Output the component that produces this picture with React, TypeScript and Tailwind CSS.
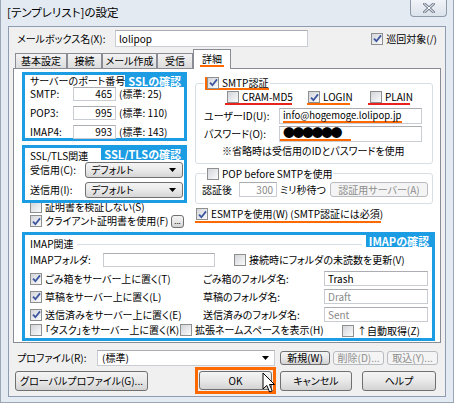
import React from "react"

const BLUE = "border-[#1c9de3]"

function Cb({ on = false }: { on?: boolean }) {
  return (
    <span className="inline-flex shrink-0 w-[12px] h-[12px] items-center justify-center border border-[#8e8f8f] bg-gradient-to-br from-[#d2d5da] to-[#fbfbfb]">
      {on && (
        <svg width="9" height="9" viewBox="0 0 9 9">
          <path d="M1 4.6 L3.4 7.2 L8 1.4" fill="none" stroke="#3d56a0" strokeWidth="1.8" />
        </svg>
      )}
    </span>
  )
}

function Check({ on = false, label, dim = false }: { on?: boolean; label: string; dim?: boolean }) {
  return (
    <span className="inline-flex items-center gap-[3px] whitespace-nowrap">
      <Cb on={on} />
      <span className={dim ? "text-[#8a8a8a]" : ""}>{label}</span>
    </span>
  )
}

function Field({ children, cls = "", right = false, grey = false }: { children?: React.ReactNode; cls?: string; right?: boolean; grey?: boolean }) {
  return (
    <div
      className={`flex items-center bg-white border border-[#c9ccd2] border-t-[#abadb3] px-[3px] whitespace-nowrap ${right ? "justify-end" : ""} ${grey ? "text-[#8a8a8a]" : ""} ${cls}`}
    >
      {children}
    </div>
  )
}

function Btn({ children, cls = "", dis = false }: { children: React.ReactNode; cls?: string; dis?: boolean }) {
  return (
    <div
      className={`flex items-center justify-center rounded-[3px] border whitespace-nowrap ${
        dis
          ? "border-[#b8bcc0] bg-[#f4f4f4] text-[#8d8d8d]"
          : "border-[#707070] bg-gradient-to-b from-[#f4f4f4] via-[#e8e8e8] to-[#d3d3d3]"
      } ${cls}`}
    >
      {children}
    </div>
  )
}

function Combo({ text, cls = "" }: { text: string; cls?: string }) {
  return (
    <div className={`flex items-center justify-between rounded-[3px] border border-[#707070] bg-gradient-to-b from-[#f4f4f4] via-[#e9e9e9] to-[#d6d6d6] pl-[5px] pr-[6px] ${cls}`}>
      <span>{text}</span>
      <svg width="7" height="4" viewBox="0 0 7 4">
        <path d="M0 0 H7 L3.5 4 Z" fill="#000" />
      </svg>
    </div>
  )
}

function Tag({ children }: { children: React.ReactNode }) {
  return (
    <span className="h-[12px] bg-[#1c9de3] text-white font-bold text-[11px] leading-[12px] px-[3px] whitespace-nowrap">
      {children}
    </span>
  )
}

function Tab({ label, sel = false, cls = "" }: { label: string; sel?: boolean; cls?: string }) {
  return sel ? (
    <div className={`relative z-10 h-[20px] mb-[-1px] bg-white border border-b-0 border-[#898c95] flex justify-center pt-[4px] ${cls}`}>
      <span className="border-b-[2px] border-[#ff6a00] h-[13px] px-[2px]">{label}</span>
    </div>
  ) : (
    <div className={`h-[15px] border border-b-0 border-[#898c95] bg-gradient-to-b from-[#f3f3f3] to-[#dcdcdc] flex items-center justify-center ${cls}`}>
      {label}
    </div>
  )
}

export default function App() {
  return (
    <div className="relative w-[454px] h-[403px] bg-[#e4eaf2] border-x border-b border-[#9aa6b5] flex flex-col text-[10px] leading-none text-black whitespace-nowrap font-['Noto_Sans_CJK_JP','Noto_Sans',sans-serif] [font-feature-settings:'palt']">
      {/* title bar */}
      <div className="h-[26px] flex items-start justify-between">
        <span className="ml-[6px] mt-[7px] text-[11.5px]">[テンプレリスト]の設定</span>
        <div className="mr-[6px] w-[37px] h-[17px] rounded-b-[4px] border border-t-0 border-[#8d99a9] bg-gradient-to-b from-[#f1f4f8] to-[#dbe2ea] flex items-center justify-center">
          <svg width="12" height="10" viewBox="0 0 12 10">
            <path d="M1.5 1 L10.5 9 M10.5 1 L1.5 9" stroke="#7b8595" strokeWidth="3" strokeLinecap="round" />
            <path d="M1.5 1 L10.5 9 M10.5 1 L1.5 9" stroke="#fff" strokeWidth="1" strokeLinecap="round" />
          </svg>
        </div>
      </div>

      {/* client area */}
      <div className="mx-[7px] h-[371px] bg-[#f0f0f0] border border-[#8e9bb0] flex flex-col px-[4px]">
        <div className="mt-[3px] h-[17px] flex items-center pl-[4px]">
          <span className="w-[98px]">メールボックス名(X):</span>
          <Field cls="w-[193px] h-[17px]">lolipop</Field>
          <span className="ml-auto mr-[4px]">
            <Check on label="巡回対象(/)" />
          </span>
        </div>

        {/* tabs */}
        <div className="mt-[2px] h-[19px] flex items-end pl-[2px]">
          <Tab label="基本設定" cls="w-[52px]" />
          <Tab label="接続" cls="w-[35px]" />
          <Tab label="メール作成" cls="w-[55px]" />
          <Tab label="受信" cls="w-[36px]" />
          <Tab label="詳細" sel cls="w-[38px]" />
        </div>

        {/* tab panel */}
        <div className="h-[275px] border border-[#898c95] bg-white pt-[3px] pl-[8px] flex flex-col">
          <div className="flex">
            {/* left column */}
            <div className="w-[165px] flex flex-col">
              <div className={`h-[69px] border-[3px] ${BLUE} flex flex-col`}>
                <div className="h-[12px] flex items-start justify-between">
                  <span className="pl-[5px] pt-[1px]">サーバーのポート番号</span>
                  <Tag>SSLの確認</Tag>
                </div>
                <div className="flex flex-col gap-[5px]">
                  {[
                    ["SMTP:", "465", "(標準: 25)"],
                    ["POP3:", "995", "(標準: 110)"],
                    ["IMAP4:", "993", "(標準: 143)"],
                  ].map(([l, v, s]) => (
                    <div key={l} className="h-[14px] flex items-center pl-[5px]">
                      <span className="w-[43px]">{l}</span>
                      <Field right cls="w-[43px] h-[14px]">{v}</Field>
                      <span className="ml-[3px]">{s}</span>
                    </div>
                  ))}
                </div>
              </div>

              <div className={`mt-[4px] h-[58px] border-[3px] ${BLUE} flex flex-col`}>
                <div className="h-[12px] flex items-start justify-between">
                  <span className="pl-[5px] pt-[3px]">SSL/TLS関連</span>
                  <Tag>SSL/TLSの確認</Tag>
                </div>
                <div className="mt-[2px] flex flex-col gap-[4px]">
                  <div className="h-[16px] flex items-center pl-[5px]">
                    <span className="w-[55px]">受信用(C):</span>
                    <Combo text="デフォルト" cls="w-[98px] h-[16px]" />
                  </div>
                  <div className="h-[16px] flex items-center pl-[5px]">
                    <span className="w-[55px]">送信用(I):</span>
                    <Combo text="デフォルト" cls="w-[98px] h-[16px]" />
                  </div>
                </div>
              </div>

              <div className="h-[10px] overflow-hidden flex items-end pl-[8px]">
                <div className="h-[13px] flex items-center">
                  <Check label="証明書を検証しない(S)" />
                </div>
              </div>
              <div className="mt-[1px] h-[14px] flex items-center pl-[8px]">
                <Check on label="クライアント証明書を使用(F)" />
                <Btn cls="ml-auto mr-[3px] w-[13px] h-[13px] text-[8px]">...</Btn>
              </div>
            </div>

            {/* right column */}
            <div className="ml-[8px] w-[238px] flex flex-col">
              <fieldset className="mt-[5px] border border-[#d5dfe5] rounded-[3px] pb-[6px]">
                <legend className="ml-[8px] px-[1px]">
                  <span className="flex items-center gap-[3px] h-[13px] border-l-[2px] border-b-[2px] border-[#ff6a00] pr-[1px]">
                    <Cb on />
                    <span>SMTP認証</span>
                  </span>
                </legend>
                <div className="mt-[1px] h-[14px] flex items-center pl-[29px]">
                  <span className="w-[67px] h-[14px] flex items-center pl-[2px] border-b-[2px] border-[#e8231c]">
                    <Check label="CRAM-MD5" />
                  </span>
                  <span className="ml-[15px] w-[43px] h-[14px] flex items-center pl-[1px] border-b-[2px] border-[#ff6a00]">
                    <Check on label="LOGIN" />
                  </span>
                  <span className="ml-[18px] w-[42px] h-[14px] flex items-center pl-[2px] border-b-[2px] border-[#e8231c]">
                    <Check label="PLAIN" />
                  </span>
                </div>
                <div className="mt-[3px] h-[16px] flex items-center pl-[8px]">
                  <span className="w-[75px]">ユーザーID(U):</span>
                  <Field cls="w-[143px] h-[16px] items-end">
                    <span className="h-[13px] border-b-[2px] border-[#ff6a00] pr-[1px] text-[9.5px] leading-[11px]">info@hogemoge.lolipop.jp</span>
                  </Field>
                </div>
                <div className="mt-[2px] h-[16px] flex items-center pl-[8px]">
                  <span className="w-[75px]">パスワード(O):</span>
                  <Field cls="w-[143px] h-[16px] items-end !px-0">
                    <span className="w-[71px] h-[15px] pl-[3px] border-b-[2px] border-[#ff6a00] text-[12px] leading-[13px] tracking-[-2.5px]">●●●●●●</span>
                  </Field>
                </div>
                <div className="mt-[4px] h-[11px] pl-[26px]">※省略時は受信用のIDとパスワードを使用</div>
              </fieldset>

              <fieldset className="mt-[3px] border border-[#d5dfe5] rounded-[3px] pb-[6px]">
                <legend className="ml-[10px] px-[1px]">
                  <span className="h-[13px] flex items-center">
                    <Check label="POP before SMTPを使用" />
                  </span>
                </legend>
                <div className="mt-[2px] h-[15px] flex items-center pl-[6px]">
                  <span className="w-[37px]">認証後</span>
                  <Field right grey cls="w-[38px] h-[15px]">300</Field>
                  <span className="ml-[3px] w-[50px]">ミリ秒待つ</span>
                  <Btn dis cls="w-[98px] h-[15px]">認証用サーバー(A)</Btn>
                </div>
              </fieldset>

              <div className="mt-[3px] w-[186px] h-[16px] flex items-center pl-[1px] border-b-[2px] border-[#ff6a00]">
                <Check on label="ESMTPを使用(W) (SMTP認証には必須)" />
              </div>
            </div>
          </div>

          {/* IMAP */}
          <div className={`mt-[4px] w-[413px] h-[109px] border-[3px] ${BLUE} flex flex-col`}>
            <div className="h-[13px] flex items-start">
              <span className="pl-[5px] pt-[4px]">IMAP関連</span>
              <span className="flex-1 h-px bg-[#d5dfe5] mt-[9px] mx-[4px]" />
              <Tag>IMAPの確認</Tag>
            </div>
            <div className="mt-[5px] h-[14px] flex items-center pl-[5px]">
              <span className="w-[73px]">IMAPフォルダ:</span>
              <Field cls="w-[112px] h-[14px]" />
              <span className="ml-[19px]">
                <Check label="接続時にフォルダの未読数を更新(V)" />
              </span>
            </div>
            {[
              ["ごみ箱をサーバー上に置く(T)", "ごみ箱のフォルダ名:", "Trash", false],
              ["草稿をサーバー上に置く(L)", "草稿のフォルダ名:", "Draft", true],
              ["送信済みをサーバー上に置く(E)", "送信済みのフォルダ名:", "Sent", true],
            ].map(([a, b, c, g], i) => (
              <div key={i} className={`${i === 0 ? "mt-[4px]" : "mt-[3px]"} h-[15px] flex items-center`}>
                <span className="w-[178px] pl-[5px]">
                  <Check on label={a as string} />
                </span>
                <span className="w-[121px]">{b as string}</span>
                <Field grey={g as boolean} cls="w-[104px] h-[15px]">{c as string}</Field>
              </div>
            ))}
            <div className="mt-[2px] h-[13px] flex items-center">
              <span className="w-[155px] pl-[5px]">
                <Check label="「タスク」をサーバー上に置く(K)" />
              </span>
              <span className="w-[162px]">
                <Check label="拡張ネームスペースを表示(H)" />
              </span>
              <Check label="↑自動取得(Z)" />
            </div>
          </div>
        </div>

        {/* profile row */}
        <div className="mt-[7px] h-[16px] flex items-center pl-[4px]">
          <span className="w-[80px]">プロファイル(R):</span>
          <div className="w-[178px] h-[16px] bg-white border border-[#c9ccd2] border-t-[#abadb3] flex items-center justify-between pl-[4px] pr-[5px]">
            <span>(標準)</span>
            <svg width="7" height="4" viewBox="0 0 7 4">
              <path d="M0 0 H7 L3.5 4 Z" fill="#000" />
            </svg>
          </div>
          <Btn cls="ml-[5px] w-[50px] h-[14px]">新規(W)</Btn>
          <Btn dis cls="ml-[3px] w-[51px] h-[14px]">削除(D)...</Btn>
          <Btn dis cls="ml-[3px] w-[51px] h-[14px]">取込(Y)...</Btn>
        </div>

        {/* bottom buttons */}
        <div className="mt-[1px] h-[27px] flex items-center">
          <Btn cls="ml-[2px] w-[133px] h-[20px]">グローバルプロファイル(G)...</Btn>
          <div className="ml-[47px] border-[3px] border-[#ff6a00] p-[1px]">
            <Btn cls="w-[73px] h-[19px] border-[#3c7fb1]">OK</Btn>
          </div>
          <Btn cls="ml-[4px] w-[72px] h-[20px]">キャンセル</Btn>
          <Btn cls="ml-[10px] w-[74px] h-[20px]">ヘルプ</Btn>
        </div>
      </div>

      {/* mouse pointer */}
      <svg className="absolute left-[261px] top-[372px]" width="14" height="23" viewBox="0 0 14 23">
        <path d="M1 1 L1 17 L4.8 13.4 L7.6 20 L10.2 18.9 L7.5 12.5 L12.5 12.5 Z" fill="#fff" stroke="#000" strokeWidth="1" strokeLinejoin="round" />
      </svg>
    </div>
  )
}
